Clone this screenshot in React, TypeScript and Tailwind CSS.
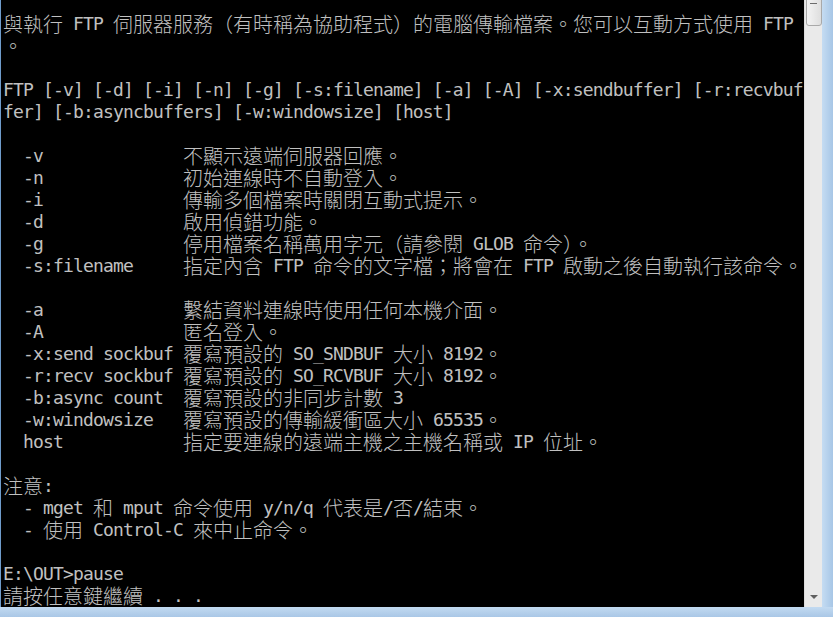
import React from 'react';

const LINES = [
  '與執行 FTP 伺服器服務（有時稱為協助程式）的電腦傳輸檔案。您可以互動方式使用 FTP',
  '。',
  '',
  'FTP [-v] [-d] [-i] [-n] [-g] [-s:filename] [-a] [-A] [-x:sendbuffer] [-r:recvbuf',
  'fer] [-b:asyncbuffers] [-w:windowsize] [host]',
  '',
  '  -v              不顯示遠端伺服器回應。',
  '  -n              初始連線時不自動登入。',
  '  -i              傳輸多個檔案時關閉互動式提示。',
  '  -d              啟用偵錯功能。',
  '  -g              停用檔案名稱萬用字元（請參閱 GLOB 命令）。',
  '  -s:filename     指定內含 FTP 命令的文字檔；將會在 FTP 啟動之後自動執行該命令。',
  '',
  '  -a              繫結資料連線時使用任何本機介面。',
  '  -A              匿名登入。',
  '  -x:send sockbuf 覆寫預設的 SO_SNDBUF 大小 8192。',
  '  -r:recv sockbuf 覆寫預設的 SO_RCVBUF 大小 8192。',
  '  -b:async count  覆寫預設的非同步計數 3',
  '  -w:windowsize   覆寫預設的傳輸緩衝區大小 65535。',
  '  host            指定要連線的遠端主機之主機名稱或 IP 位址。',
  '',
  '注意:',
  '  - mget 和 mput 命令使用 y/n/q 代表是/否/結束。',
  '  - 使用 Control-C 來中止命令。',
  '',
  'E:\\OUT>pause',
  '請按任意鍵繼續 . . .',
];

// split a console line into narrow (ascii) and wide (cjk) runs
function splitRuns(line: string) {
  const runs: { wide: boolean; text: string }[] = [];
  for (const ch of line) {
    const wide = ch.charCodeAt(0) > 0x7f;
    const last = runs[runs.length - 1];
    if (last && last.wide === wide) last.text += ch;
    else runs.push({ wide, text: ch });
  }
  return runs;
}

function ConsoleLine({ text }: { text: string }) {
  return (
    <div className="h-[22px] whitespace-pre flex items-center">
      {splitRuns(text).map((r, i) =>
        r.wide ? (
          <span
            key={i}
            className="text-[20px] leading-[22px] font-['Noto_Sans_CJK_TC','Noto_Sans_CJK_SC',sans-serif] font-light"
          >
            {r.text}
          </span>
        ) : (
          <span
            key={i}
            className="text-[18px] leading-[22px] tracking-[-0.84px] font-['DejaVu_Sans_Mono',monospace]"
          >
            {r.text}
          </span>
        )
      )}
    </div>
  );
}

export default function App() {
  return (
    <div className="w-[833px] h-[617px] bg-[#b4d0ec] flex flex-col overflow-hidden">
      <div className="flex h-[607px]">
        <div className="w-[1px] bg-[#6f9ccb]" />
        <div className="flex-1 bg-black text-[#c0c0c0] pt-[13px] pl-[2px] overflow-hidden">
          {LINES.map((l, i) => (
            <ConsoleLine key={i} text={l} />
          ))}
        </div>
        {/* scrollbar */}
        <div className="w-[18px] bg-[#eaeaea] border-l border-[#dcdcdc] flex flex-col justify-between items-center">
          <div className="w-[16px] h-[28px] mt-[-2px] rounded-b-[3px] border border-[#a9a9a9] bg-gradient-to-r from-[#f4f4f4] to-[#dedede] flex justify-center">
            <div className="w-[7px] h-[1px] bg-[#6c6c6c] mt-[4px]" />
          </div>
          <div className="mb-[8px] w-0 h-0 border-l-[4px] border-r-[4px] border-t-[4px] border-l-transparent border-r-transparent border-t-[#606060]" />
        </div>
        <div className="w-[11px] bg-gradient-to-r from-[#c5dcf2] to-[#a7c6e6]" />
      </div>
      <div className="flex-1 bg-gradient-to-b from-[#c2daf1] to-[#a9c7e6]" />
    </div>
  );
}
